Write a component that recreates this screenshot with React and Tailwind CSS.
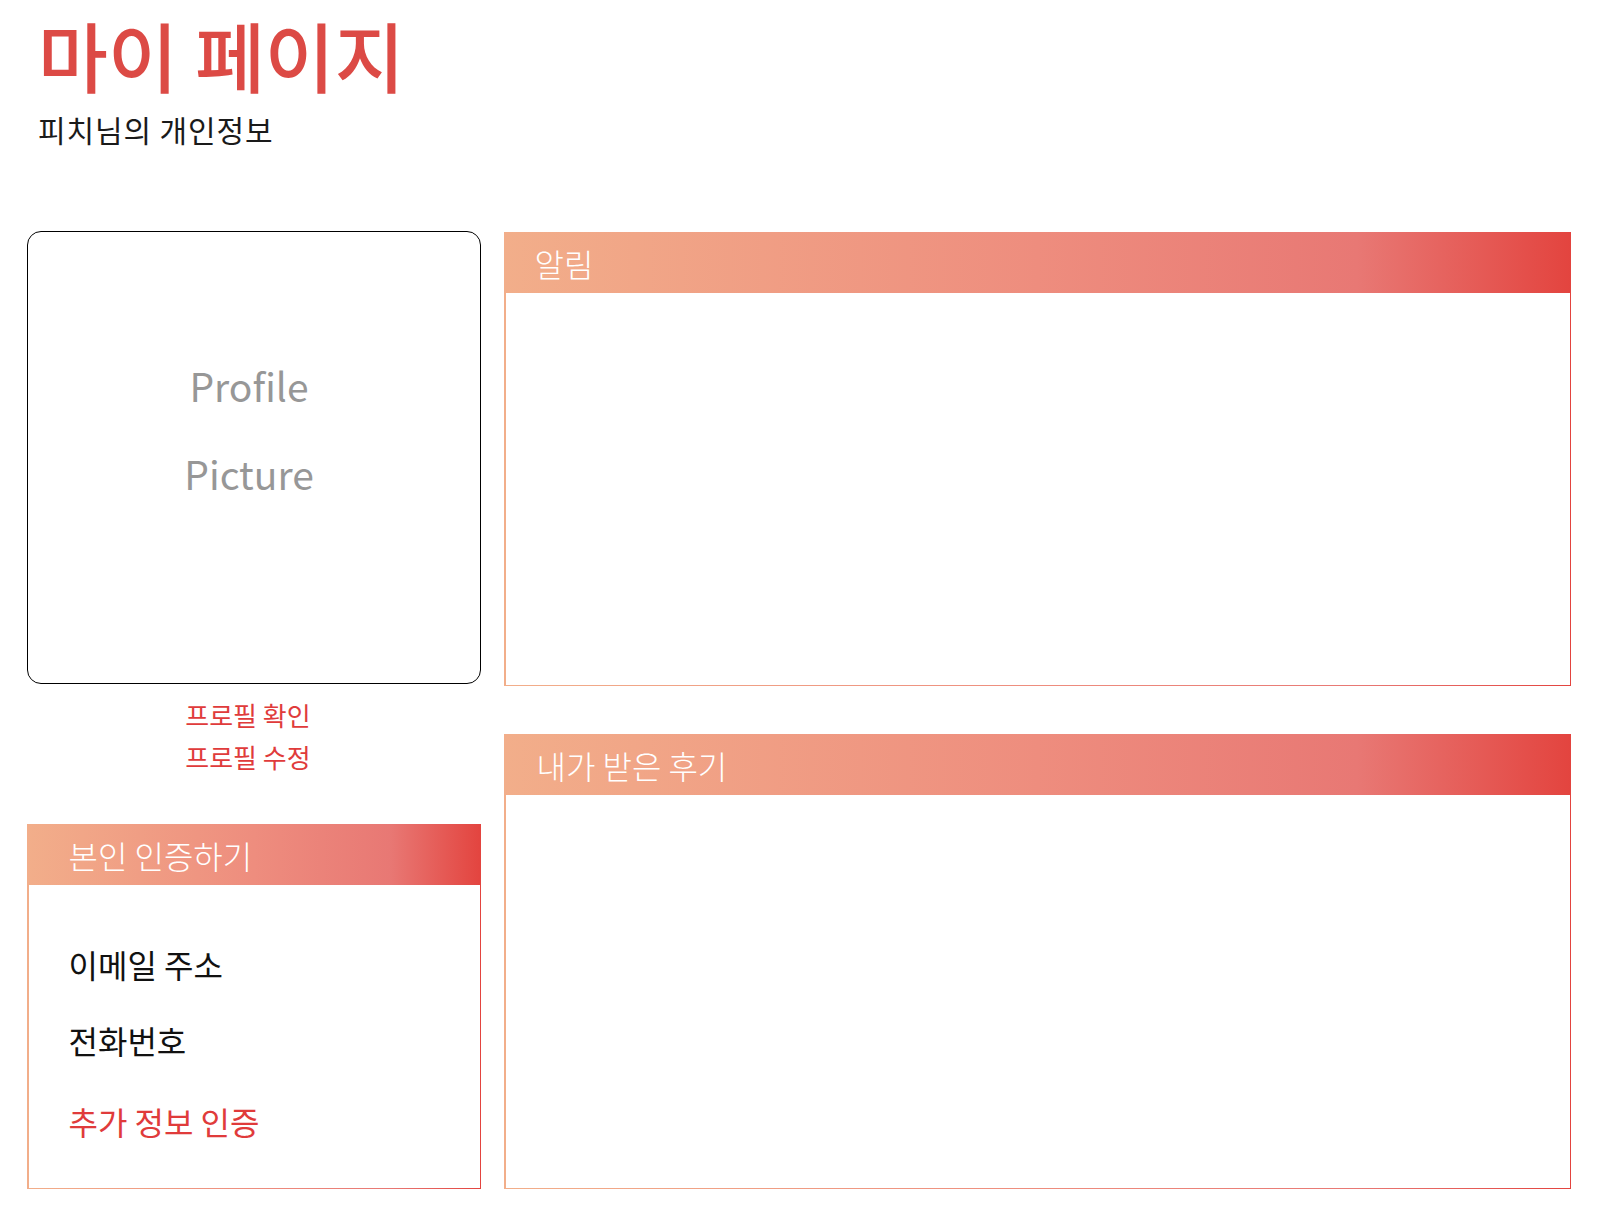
import React from 'react';

const font = "font-['Noto_Sans_CJK_KR','Noto_Sans',sans-serif]";

// Panel with a gradient border and a gradient title bar
const GradientPanel = ({ title, titlePad, className, children }) => (
  <div
    className={`flex flex-col p-[1.5px] bg-[linear-gradient(to_right,#f2ae8a_0%,#ee8d7e_50%,#e87874_80%,#e3443f_100%)] ${className}`}
  >
    <div className={`h-[59px] shrink-0 flex items-start ${titlePad}`}>
      <span className="text-[32px] leading-[58px] text-white font-light">{title}</span>
    </div>
    <div className="flex-1 bg-white">{children}</div>
  </div>
);

const App = () => {
  return (
    <div className={`${font} bg-white min-h-[1221px] w-[1598px]`}>
      <div className="pl-[38px] pt-[16px]">
        <h1 className="text-[76px] leading-none font-medium text-[#dc4a45]">마이 페이지</h1>
        <p className="mt-[22px] text-[30px] leading-none tracking-[0.03em] text-[#1a1a1a]">피치님의 개인정보</p>
      </div>

      <div className="mt-[87px] px-[27px] grid grid-cols-[454px_1fr] gap-x-[23px]">
        {/* left column */}
        <div className="flex flex-col">
          <div className="h-[453px] border-[1.5px] border-black rounded-[14px] flex flex-col items-center pr-[10px] pt-[109px] text-[39px] leading-[88px] text-[#979797]">
            <p>Profile</p>
            <p>Picture</p>
          </div>
          <div className="mt-[10px] pr-[12px] flex flex-col items-center text-[26px] leading-[42px] text-[#e03b3b]">
            <a>프로필 확인</a>
            <a>프로필 수정</a>
          </div>
          <GradientPanel title="본인 인증하기" titlePad="pl-[40px]" className="mt-[46px] h-[365px]">
            <div className="pl-[40px] pt-[63px] text-[32px] leading-none">
              <p className="text-[#111]">이메일 주소</p>
              <p className="mt-[44px] text-[#111]">전화번호</p>
              <p className="mt-[49px] text-[#e03b3b]">추가 정보 인증</p>
            </div>
          </GradientPanel>
        </div>

        {/* right column */}
        <div className="flex flex-col gap-[48px] pt-[1px]">
          <GradientPanel title="알림" titlePad="pl-[29px]" className="h-[454px]" />
          <GradientPanel title="내가 받은 후기" titlePad="pl-[31px]" className="h-[455px]" />
        </div>
      </div>
    </div>
  );
};

export default App;
